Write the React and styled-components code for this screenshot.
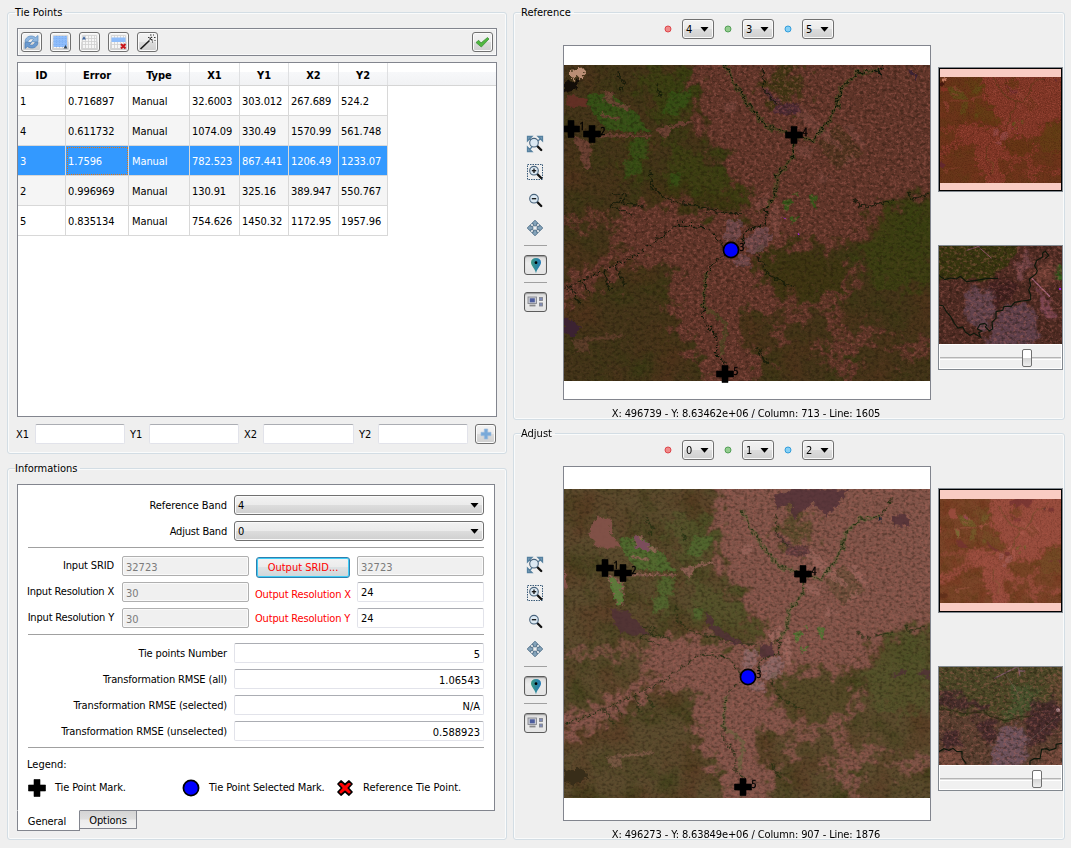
import React, { useId } from 'react';
import styled, { createGlobalStyle, css } from 'styled-components';

const Global = createGlobalStyle`
  * { box-sizing: border-box; }
  body { margin: 0; background: #efefef; color: #000; font: 11px/14px "DejaVu Sans Condensed", "DejaVu Sans", sans-serif; font-stretch: condensed; }
  svg { display: block; }
`;

const Window = styled.div`
  display: grid;
  grid-template-columns: 500px 552px;
  column-gap: 6px;
  width: 1071px;
  height: 848px;
  padding: 5px 0 0 7px;
  overflow: hidden;
  background: #efefef;
`;
const Column = styled.div`
  display: flex;
  flex-direction: column;
  gap: ${(p) => p.$gap}px;
`;
const Group = styled.fieldset`
  margin: 0;
  min-width: 0;
  height: ${(p) => p.$height}px;
  padding: ${(p) => p.$pad};
  border: 1px solid #d3dde4;
  border-radius: 3px;
  box-shadow: inset 0 0 0 1px #fafbfb;
`;
const Title = styled.legend`
  height: 14px;
  padding: 0 3px 0 0;
  margin-left: ${(p) => p.$shift || 0}px;
  line-height: 16px;
  white-space: nowrap;
`;

/* ---- tie point panel ---- */
const Toolbar = styled.div`
  display: flex;
  align-items: center;
  gap: 8px;
  height: 28px;
  padding: 0 3px;
  border: 1px solid #82858e;
  box-shadow: inset 0 0 0 1px #fafafa;
`;
const Spacer = styled.span`flex: 1;`;
const ToolButton = styled.span`
  display: flex;
  align-items: center;
  justify-content: center;
  flex: none;
  width: 21px;
  height: 20px;
  border: 1px solid #707070;
  border-radius: 3px;
  background: linear-gradient(#f3f3f3, #ebebeb 48%, #dcdcdc 52%, #cfcfcf);
  box-shadow: inset 0 0 0 1px #fbfbfb;
`;
const TableFrame = styled.div`
  height: 355px;
  margin-top: 6px;
  border: 1px solid #82858e;
  background: #fff;
`;
const cols = '48px 63px 61px 50px 49px 50px 49px';
const HeadRow = styled.div`
  display: grid;
  grid-template-columns: ${cols} 1fr;
  height: 23px;
  border-bottom: 1px solid #d5d5d5;
  background: linear-gradient(#fff 40%, #f7f8fa 41%, #f1f2f4);
`;
const HeadCell = styled.span`
  padding-top: 6px;
  border-right: 1px solid #dfe0e2;
  text-align: center;
  font-weight: bold;
`;
const Row = styled.div`
  display: grid;
  grid-template-columns: ${cols};
  width: 370px;
  height: 30px;
  background: ${(p) => (p.$selected ? '#3399ff' : p.$alt ? '#f5f5f5' : '#fff')};
  color: ${(p) => (p.$selected ? '#fff' : '#000')};
`;
const Cell = styled.span`
  height: 30px;
  padding: 9px 0 0 ${(p) => p.$left}px;
  border-right: 1px solid #d8d8d8;
  border-bottom: 1px solid #d8d8d8;
  letter-spacing: -0.1px;
  white-space: nowrap;
  ${(p) => p.$focus && css`outline: 1px dotted #d9741b; outline-offset: -2px;`}
`;
const EntryRow = styled.div`
  display: grid;
  grid-template-columns: 18px 90px 24px 90px 24px 91px 24px 90px 28px;
  align-items: center;
  height: 20px;
  margin-top: 7px;
  & > span:nth-child(n + 3):nth-child(odd) { padding-left: 6px; }
  & > span:last-child { margin-left: 7px; padding: 0 !important; }
`;
const Label = styled.span`
  margin: 0 1px 0 -1px;
  letter-spacing: ${(p) => p.$ls ?? -0.14}px;
  text-align: ${(p) => p.$align || 'left'};
  color: ${(p) => p.$color || '#000'};
  padding-top: ${(p) => p.$drop ?? 1}px;
  white-space: nowrap;
`;
const Field = styled.span`
  display: block;
  height: 20px;
  padding: ${(p) => p.$drop || 3}px 3px 0;
  border: 1px solid ${(p) => (p.$off ? '#afafaf' : '#e2e3ea')};
  border-top-color: ${(p) => (p.$off ? '#afafaf' : '#abadb3')};
  border-radius: 2px;
  background: ${(p) => (p.$off ? '#f0f0f0' : '#fff')};
  box-shadow: ${(p) => (p.$off ? 'inset 0 0 0 1px #fafafa' : 'none')};
  color: ${(p) => (p.$off ? '#7b7b7b' : '#000')};
  text-align: ${(p) => p.$align || 'left'};
`;

/* ---- information panel ---- */
const TabPage = styled.div`
  display: flex;
  flex-direction: column;
  width: 478px;
  height: 327px;
  padding: 10px 10px 0;
  border: 1px solid #82858e;
  background: #fff;
`;
const FormRow = styled.div`
  display: grid;
  grid-template-columns: ${(p) => (p.$four ? '88px 127px 94px 127px' : '200px 250px')};
  grid-template-rows: 20px;
  column-gap: ${(p) => (p.$four ? 7 : 6)}px;
  align-items: center;
  height: 20px;
  margin-bottom: 6px;
  ${(p) => p.$four && css`margin-left: -1px;`}
`;
const Divider = styled.div`
  width: 456px;
  height: 1px;
  margin-bottom: 8px;
  background: #a0a0a0;
`;
const Combo = styled.span`
  display: flex;
  align-items: center;
  justify-content: space-between;
  width: ${(p) => p.$width}px;
  height: 20px;
  padding: 2px 4px 0 3px;
  border: 1px solid #707070;
  border-radius: 3px;
  background: linear-gradient(#f2f2f2, #ebebeb 49%, #dddddd 50%, #cfcfcf);
  box-shadow: inset 0 0 0 1px #fafafa;
  & > svg { margin-top: -2px; }
`;
const PushButton = styled.span`
  align-self: start;
  height: 21px;
  padding-top: 3px;
  margin-top: 1px;
  border: 1px solid #2f7fae;
  border-radius: 3px;
  background: linear-gradient(#f2f2f2, #ebebeb 49%, #dde2e4 50%, #cfd6d9);
  box-shadow: inset 0 0 0 1px #3fcdf7;
  color: #f00;
  text-align: center;
`;
const LegendTitle = styled.div`
  margin: 2px 0 0 -1px;
`;
const LegendRow = styled.div`
  display: grid;
  grid-template-columns: 28px 126px 28px 126px 28px 1fr;
  align-items: center;
  height: 20px;
  margin-top: 6px;
`;
const Tabs = styled.div`
  display: flex;
  align-items: flex-start;
  margin-top: -1px;
`;
const Tab = styled.span`
  width: ${(p) => (p.$active ? 63 : 57)}px;
  height: ${(p) => (p.$active ? 21 : 19)}px;
  padding: ${(p) => (p.$active ? '4px 3px 0 0' : '3px 0 0')};
  border: 1px solid #82858e;
  ${(p) => (p.$active ? 'border-top-color: #fff;' : 'border-left-width: 0;')}
  background: ${(p) => (p.$active ? '#fff' : 'linear-gradient(#d4d4d4, #dedede 48%, #ececec 52%, #f2f2f2)')};
  text-align: center;
  letter-spacing: -0.1px;
`;

/* ---- map panels ---- */
const BandRow = styled.div`
  display: flex;
  align-items: flex-start;
  gap: 10px;
  height: 26px;
  padding-left: 150px;
  & > i { margin-top: 6px; }
`;
const Dot = styled.i`
  width: 8px;
  height: 8px;
  border: 1px solid ${(p) => p.$edge};
  border-radius: 50%;
  background: ${(p) => p.$fill};
  transform: scale(0.86);
`;
const ViewRow = styled.div`
  display: grid;
  grid-template-columns: 49px 368px 125px;
  height: 355px;
`;
const ToolColumn = styled.div`
  display: flex;
  flex-direction: column;
  align-items: flex-start;
  padding: 90px 0 0 10px;
  gap: 10px;
  & > svg { margin-left: 2px; }
`;
const ToolLine = styled.i`
  width: 23px;
  height: 1px;
  margin: ${(p) => p.$up}px 0 -1px;
  background: #a0a0a0;
`;
const Toggle = styled.span`
  display: flex;
  align-items: center;
  justify-content: center;
  width: 23px;
  height: 20px;
  border: 1px solid #5c5c5c;
  border-radius: 3px;
  background: linear-gradient(#d9d9d9, #ececec 40%, #e4e4e4);
  box-shadow: inset 0 1px 1px #999;
`;
const Canvas = styled.div`
  border: 1px solid #82858e;
  background: #fff;
  overflow: hidden;
`;
const Side = styled.div`
  display: flex;
  flex-direction: column;
  gap: 53px;
  margin-left: 7px;
  padding-top: 22px;
  width: 125px;
`;
const Overview = styled.div`
  height: 125px;
  border: 1px solid #82888f;
  background: #f9ccc3;
  outline: 1px solid #000;
  outline-offset: -2px;
  padding: ${(p) => p.$top}px 1px 0;
`;
const Lens = styled.div`
  height: 125px;
  border: 1px solid #82888f;
  background: #f0f0f0;
`;
const Slider = styled.div`
  display: flex;
  align-items: center;
  height: 25px;
  border: 1px solid #fff;
  padding-left: ${(p) => p.$at}px;
  background: linear-gradient(#f0f0f0 12px, #b4b4b4 12px, #b4b4b4 13px, #dcdcdc 13px, #dcdcdc 14px, #fff 14px, #fff 15px, #f0f0f0 15px);
  & > i { width: 10px; height: 18px; margin-top: 3px; border: 1px solid #707070; border-radius: 2px; background: linear-gradient(#fff 48%, #d5d5d5 52%, #eee); }
`;
const Status = styled.div`
  width: 366px;
  margin-left: 49px;
  padding-top: 7px;
  text-align: center;
  letter-spacing: -0.12px;
  white-space: nowrap;
`;

/* ---- small drawings ---- */
const Arrow = () => (
  <svg width="9" height="5" viewBox="0 0 9 5"><path d="M.5 0h8L4.5 4.8z" /></svg>
);
const Cross = ({ x = 9, y = 9 }) => (
  <path transform={`translate(${x} ${y})`} d="M-3-8.5h6V-3h5.5v6H3v5.5h-6V3h-5.5v-6H-3z" stroke="#000" strokeWidth=".6" strokeLinejoin="round" />
);
const Disc = ({ x = 9, y = 9 }) => <circle cx={x} cy={y} r="7.6" fill="#00f" stroke="#000" strokeWidth="1.7" />;
const Refresh = () => (
  <svg width="17" height="16" viewBox="0 0 17 16">
    <path d="M2 7.500C2.500 2 9 .5 12.500 3.500L15 1.500V7.500H8.500L10.500 5.500C8.500 4 6 4.800 5.200 7.500z" fill="#8fb6df" stroke="#5a8cc2" strokeWidth=".7" />
    <path d="M15 8.500C14.500 14 8 15.500 4.500 12.500L2 14.500V8.500H8.500L6.500 10.500C8.500 12 11 11.200 11.800 8.500z" fill="#6b9ad0" stroke="#4a7cb3" strokeWidth=".7" />
  </svg>
);
const Grid = ({ kind }) => (
  <svg width="17" height="16" viewBox="0 0 17 16">
    <rect x="1.500" y="1.500" width="14" height="13" fill="#f6f6f6" />
    <path d="M1.500 1.500h14v13h-14zM1.500 4.500h14m-14 3h14m-14 3h14M4.500 1.500v13m3-13v13m3-13v13m3-13v13" fill="none" stroke="#cfcfcf" strokeWidth=".8" />
    {kind === 'all' && <><path d="M1.500 2h13.500v11h-13.500z" fill="#8fbdfb" /><path d="M1.500 4.500h13.500m-13.500 3h13.500m-13.500 3h13.500M4.500 2v11m3-11v11m3-11v11m3-11v11" stroke="#79acf2" strokeWidth=".7" strokeDasharray="1 1" /><path d="M11.500 14.500l2-3.500 2 3.500z" fill="#345" /></>}
    {kind === 'none' && <path d="M1 5.500l2-3.500 2 3.500z" fill="#3f66a0" />}
    {kind === 'remove' && <><path d="M1.500 3.500h14v4.500h-14z" fill="#8fbdfb" /><path d="M11 10l4.500 4.500m0-4.500L11 14.500" stroke="#c9161b" strokeWidth="2" /></>}
  </svg>
);
const Wand = () => (
  <svg width="17" height="16" viewBox="0 0 17 16" fill="none">
    <path d="M1.500 15L10.500 6.500" stroke="#1c1c1c" strokeWidth="1.700" />
    <path d="M9 3.500h1.500m.500-2.500h1.500m1.500 0h1m0 2.500h1.500m-1 3h1m-3.500 1.500h1M10.500 5.500l2.500-2.500M11 4l2.500 2.500" stroke="#333" strokeWidth="1.100" />
    <path d="M11.700 5.300l1.200-1.200" stroke="#fff" />
  </svg>
);
const Check = () => (
  <svg width="17" height="16" viewBox="0 0 17 16"><path d="M2 8.500l2.700-2.200L7 9l6.500-5.500L15 5 7.300 13z" fill="#4fb83e" stroke="#3f8f3a" strokeWidth=".8" /></svg>
);
const Plus = () => (
  <svg width="12" height="12" viewBox="0 0 12 12"><path d="M4.300 1h3.400v3.300H11v3.400H7.700V11H4.300V7.700H1V4.300h3.300z" fill="#79a9d9" stroke="#9dbdde" strokeWidth=".7" /></svg>
);
const Magnifier = ({ kind }) => (
  <svg width="18" height="18" viewBox="0 0 18 18" fill="none">
    {kind === 'extent' && <path d="M1.500 1.500h4.500L1.500 6zM16.500 1.500V6L12 1.500zM1.500 16.500V12L6 16.500zM3 3l3 3m9-3l-3 3M3 15l3-3" fill="#7fa3be" stroke="#55809f" strokeWidth="1.300" />}
    {kind === 'in' && <rect x="1.500" y="1.500" width="15" height="15" stroke="#395a78" strokeDasharray="1.500 1" />}
    <path d="M11.200 11l4 4" stroke="#111" strokeWidth="2.400" strokeLinecap="round" />
    <circle cx="8" cy="7.700" r="4.300" fill="#dbe8f2" stroke="#48637c" strokeWidth="1.100" />
    {kind !== 'extent' && <path d="M5.800 7.700h4.400" stroke="#111" strokeWidth="1.300" />}
    {kind === 'in' && <path d="M8 5.500v4.400" stroke="#111" strokeWidth="1.300" />}
  </svg>
);
const Pan = () => (
  <svg width="18" height="18" viewBox="0 0 18 18" fill="#84a3ba" stroke="#4c6b84" strokeWidth=".9">
    {[0, 90, 180, 270].map((a) => <path key={a} transform={`rotate(${a} 9 9)`} d="M9 1.200l3.400 3.500h-1.800v2.100H7.400V4.700H5.600z" />)}
  </svg>
);
const Pin = () => (
  <svg width="12" height="17" viewBox="0 0 12 17">
    <defs><linearGradient id="pin"><stop stopColor="#3d9b83" /><stop offset="1" stopColor="#2279b8" /></linearGradient></defs>
    <path d="M6 16.500C5.600 12 1 9 1 5.500 1 2.500 3 1 6 1s5 1.500 5 4.500C11 9 6.400 12 6 16.500z" fill="url(#pin)" /><circle cx="6" cy="5.700" r="1.400" />
  </svg>
);
const Screens = () => (
  <svg width="17" height="14" viewBox="0 0 17 14" fill="#7f8bb8" stroke="#85878f" strokeWidth=".9">
    <rect x="1" y="2" width="8.500" height="6.500" fill="#c9cbd2" /><rect x="2.800" y="3.300" width="5" height="4" fill="#4d5d9d" stroke="none" /><path d="M2.500 10.500h6" stroke="#888" strokeWidth="1.800" />
    <rect x="12.500" y="2.500" width="3" height="3" /><rect x="12.500" y="8" width="3" height="3" />
  </svg>
);

/* ---- satellite scenes ---- */
const palettes = {
  reference: { base: '#423418', soil: '#603529', green: '#37430f', leaf: '#2f5c16', field: '#74443a', deep: '#3b3511', city: '#75535f', river: '#0c1606', purple: '#452637' },
  adjust: { base: '#5a4b2d', soil: '#82554a', green: '#53582b', leaf: '#4d7831', field: '#9a685e', deep: '#554a28', city: '#927378', river: '#1b2a0d', purple: '#54333b' },
};

const grains = [
  ['l', '.10 .12', 4, 3, '.72 .41 .37', '4 0 0 0 -1.900'],
  ['d', '.09 .11', 4, 15, '.10 .07 .03', '3.500 0 0 0 -1.650'],
  ['g', '.010', 5, 31, '.19 .23 .06', '3 0 0 0 -1.350'],
  ['o', '.008', 5, 57, '.36 .19 .12', '3 0 0 0 -1.400'],
];
const Filters = ({ id, size = 1 }) => (
  <defs>
    <filter id={`${id}r`} x="-5%" y="-5%" width="110%" height="110%" colorInterpolationFilters="sRGB">
      <feTurbulence type="fractalNoise" baseFrequency=".028" numOctaves="6" seed="4" result="n" />
      <feGaussianBlur in="SourceGraphic" stdDeviation={10 * size} result="b" />
      <feDisplacementMap in="b" in2="n" scale={150 * size} xChannelSelector="R" yChannelSelector="G" />
      <feGaussianBlur stdDeviation="1.500" />
    </filter>
    <filter id={`${id}w`} x="-5%" y="-5%" width="110%" height="110%" colorInterpolationFilters="sRGB">
      <feTurbulence type="fractalNoise" baseFrequency=".06" numOctaves="4" seed="8" result="n" />
      <feDisplacementMap in="SourceGraphic" in2="n" scale={26 * size} xChannelSelector="R" yChannelSelector="G" />
    </filter>
    {grains.map(([k, f, octaves, seed, rgb, gain]) => {
      const [r, g, b] = rgb.split(' ');
      return (
        <filter key={k} id={id + k} x="0" y="0" width="100%" height="100%" colorInterpolationFilters="sRGB">
          <feTurbulence type="fractalNoise" baseFrequency={f} numOctaves={octaves} seed={seed} />
          <feColorMatrix values={`0 0 0 0 ${r} 0 0 0 0 ${g} 0 0 0 0 ${b} ${gain}`} />
        </filter>
      );
    })}
  </defs>
);

const SoilShapes = () => (
  <>
    <path fill="currentColor" d="M400-80 1320-80 1320 440 1110 455 1010 475 940 530 880 600 820 620 700 610 620 630 590 660 600 720 680 770 640 810 540 820 550 900 620 970 560 1080 440 1080 420 960 335 860 330 720 350 660 220 680 100 750-130 860-130 780 60 700 180 620 180 510 260 490 350 500 470 525 570 530 590 500 500 370 420 260z" />
    <path d="M580 740C680 830 740 820 800 790S860 760 872 670M800 790C860 860 820 900 880 1060M950 860L830 960 760 920M680 860L620 870M1000 920L1070 930 1160 900" fill="none" stroke="currentColor" strokeWidth="38" strokeLinejoin="round" />
    <path d="M-130 560C20 530 150 540 200 580" fill="none" stroke="currentColor" strokeWidth="24" />
  </>
);

function Ground({ id, c }) {
  const box = { x: -150, y: -60, width: 1320, height: 1150 };
  return (
    <>
      <rect {...box} fill={c.base} />
      <rect {...box} filter={`url(#${id}g)`} opacity=".5" />
      <rect {...box} filter={`url(#${id}o)`} opacity=".4" />
      <g filter={`url(#${id}r)`} fill={c.green} opacity=".65">
        <path d="M240 90L400 90 400 240 280 230zM330 290L480 380 570 480 540 510 320 450zM190 290L260 300 250 410 190 420z" />
        <path d="M990 500L1130 480 1130 740 960 760 900 640z" />
      </g>
      <g filter={`url(#${id}w)`}>
        <path d="M75 165L150 160 230 215 270 280 140 270 100 220z" fill={c.leaf} opacity=".7" />
        <path d="M330 160L395 150 385 190 345 225 310 215zM190 370L240 340 245 400 195 415zM330 400L365 400 360 440 330 435zM225 290L270 295 260 360 200 345z" fill={c.leaf} opacity=".5" />
        <path d="M135 150L155 155 165 185 212 200 205 212 135 185zM125 218L185 235 180 244 120 230zM40 285L95 310 95 388 72 390zM285 265L400 240 400 252 330 265 315 300zM95 282L275 284 275 290 100 293z" fill={c.field} opacity=".8" />
        <path d="M30 900L190 880 195 890 85 905 90 935 55 940z" fill={c.field} opacity=".5" />
        <path d="M110 310L210 300 190 360 110 350zM280 330L330 340 320 400 280 390z" fill={c.base} opacity=".7" />
      </g>
      <g filter={`url(#${id}r)`} color={c.soil}><SoilShapes /></g>
      <g filter={`url(#${id}r)`} fill={c.deep} opacity=".85">
        <path d="M620 80L700 75 730 150 700 190 640 180 610 150z" />
        <path d="M590 640L700 620 800 640 850 700 830 760 740 790 660 740 620 710z" />
        <path d="M270 450C340 470 400 500 540 510L550 490 330 430z" />
      </g>
      <g filter={`url(#${id}w)`}>
        <path d="M770 310L835 250 910 340 830 390z" fill={c.base} opacity=".5" />
        <path d="M705 225L730 200 850 320 840 330 770 285zM850 250L870 250 920 320 920 335 870 290zM705 320L760 320 755 355 715 350zM780 395L820 410 800 430 770 420zM490 190L530 180 520 215 495 220zM865 350L885 340 880 365 850 380z" fill={c.field} opacity=".7" />
        <path d="M585 490L630 450 620 500 595 520zM625 520L650 490 662 530 655 590 640 585z" fill={c.field} opacity=".9" />
        <path d="M500 540L550 545 540 590 495 610zM550 600L590 565 620 560 640 600 600 640 565 640zM515 660L560 640 575 680 530 680z" fill={c.city} opacity=".6" />
        <path d="M640 195L720 190 715 222 645 225zM600 140L620 150 670 190 640 190z" fill={c.purple} opacity=".7" />
        <path d="M665 490L690 470 700 485 680 515zM745 465L765 460 770 505 755 500zM690 540L715 520 720 530 700 550zM700 460L715 455 715 475z" fill={c.leaf} opacity=".85" />
      </g>
      <mask id={`${id}m`} maskUnits="userSpaceOnUse" {...box}>
        <rect {...box} fill="#3a3a3a" />
        <g filter={`url(#${id}r)`} color="#fff"><SoilShapes /></g>
      </mask>
      <g mask={`url(#${id}m)`}><rect {...box} filter={`url(#${id}l)`} opacity=".34" /></g>
      <rect {...box} filter={`url(#${id}d)`} opacity=".36" />
      <g stroke={c.river} strokeWidth="4" opacity=".75" fill="none" filter={`url(#${id}w)`}>
        <path d="M150 460L200 465 190 490 250 500M180 480L150 500 210 520M270 390L275 440 320 480 400 495 480 520 550 520M590 640L620 700 700 745M30 740L60 790M70 725L85 760M130 690L150 750M165 680L200 740M880 480L900 500 960 490 1000 480M1040 460L1060 480 1110 460M610 85L610 150 650 190M170 100L195 130 180 150M290 130L300 170M590 920L620 970" />
      </g>
      <g fill="none" filter={`url(#${id}w)`}>
        <path d="M490 70L530 140 570 200 620 260 700 285 760 300 800 250 830 200 840 150 890 100 960 90M700 290L700 350 650 410 650 460 620 500M440 690L430 800 500 850 480 950" stroke={c.leaf} strokeWidth="12" opacity=".3" />
        <g stroke={c.river} strokeWidth="5" strokeDasharray="8 3 4 4">
          <path d="M490 70L530 140 570 200 620 260 700 285 760 300 800 250 830 200 840 150 890 100 960 90 1000 30M700 290L700 350 650 410 650 460 620 500 615 555 560 570 545 620" />
          <path d="M-100 790L15 745 110 700 230 645 320 580 360 550 450 570 480 610 512 630 440 690 430 800 430 840 470 890 470 950 500 970" strokeWidth="4" />
        </g>
      </g>
    </>
  );
}

function Scene({ kind, width, height }) {
  const id = useId().replace(/[^a-z0-9]/gi, '') + 't';
  const c = palettes[kind];
  const adjust = kind === 'adjust';
  return (
    <svg width={width} height={height} viewBox={adjust ? '12 87 1098 927' : '12 75 1098 948'} preserveAspectRatio="none">
      <Filters id={id} />
      <g transform={adjust ? 'translate(107 89) scale(.89)' : undefined}><Ground id={id} c={c} /></g>
      {adjust ? (
        <g filter={`url(#${id}w)`}>
          <path d="M110 170L155 180 150 215 180 265 105 260 85 210zM12 330L20 345 20 390 12 385z" fill="#85524a" opacity=".9" />
          <path d="M150 445L205 455 270 525 180 520zM435 445L470 500 560 560 510 550 450 510zM640 110L700 85 860 90 840 130 800 170 760 130 700 175 690 130 650 150zM995 170L1040 160 1050 195 1000 200zM985 650L1040 628 1030 645zM1070 640L1110 625 1110 655zM600 560L640 545 640 590 600 590z" fill="#502f37" opacity=".8" />
          <path d="M12 930L70 925 85 955 40 975 12 965z" fill="#382d19" />
          <path d="M225 225L270 250 265 275 230 265z" fill="#7b4d5c" /><path d="M145 350L185 370 190 430 170 435z" fill="#548036" opacity=".8" />
          <ellipse cx="960" cy="178" rx="5" ry="10" fill="#142035" />
        </g>
      ) : (
        <g filter={`url(#${id}w)`}>
          <path d="M30 90L75 85 65 120 50 105 30 115z" fill="#b98d74" /><path d="M12 125L55 115 50 150 12 160z" fill="#130d08" />
          <path d="M22 165L80 175 80 200 22 200z" fill="#6a3028" opacity=".8" />
          <path d="M1040 85L1070 105 1070 125zM12 830L65 860 35 895 12 870z" fill="#3b2232" />
          <ellipse cx="957" cy="103" rx="6" ry="10" fill="#0c130b" /><circle cx="670" cy="535" r="3" fill="#9b28d8" /><circle cx="716" cy="583" r="3" fill="#9b28d8" />
        </g>
      )}
    </svg>
  );
}

function LensView({ kind }) {
  const id = useId().replace(/[^a-z0-9]/gi, '') + 'z';
  const adjust = kind === 'adjust';
  const y = adjust ? 561 : 573;
  const box = { x: 27, y, width: 369, height: 294 };
  return (
    <svg width="123" height="98" viewBox={`27 ${y} 369 294`}>
      <Filters id={id} size={0.4} />
      <rect {...box} fill={adjust ? '#593f30' : '#4d2a22'} />
      {adjust ? (
        <>
          <g filter={`url(#${id}r)`}>
            <path d="M0 530H410V640L330 700 220 720 160 695 100 710 0 680z" fill="#4a4726" />
            <path d="M250 610L330 630 320 700 220 720z" fill="#455a30" opacity=".6" />
            <path d="M20 635L90 640 130 665 185 670 180 690 120 690 60 690 20 665zM320 660L380 655 396 740 300 800 290 720zM40 745L80 760 100 800 60 815 35 780zM140 710L205 730 180 800 145 760z" fill="#43282c" opacity=".85" />
            <path d="M200 750L270 735 300 790 270 865 180 865z" fill="#6d525c" /><path d="M15 815L80 810 100 865H15zM330 835L406 795V870H310z" fill="#744a3c" />
            <path d="M350 600L400 580 400 670 370 650z" fill="#684a35" opacity=".7" />
          </g>
          <path d="M192 596L262 560M265 563l5 25m-5-15h20" fill="none" stroke="#896077" strokeWidth="4" opacity=".8" />
          <path d="M225 580L270 650M396 700L300 780" stroke="#776661" strokeWidth="2" opacity=".7" />
          <circle cx="384" cy="691" r="6" fill="#c69aa0" />
        </>
      ) : (
        <>
          <g filter={`url(#${id}r)`}>
            <path d="M0 550H260L250 610 200 660 120 680 80 665 0 670z" fill="#37360f" />
            <path d="M105 710L190 700 200 750 170 830 110 800z" fill="#62434d" /><path d="M200 770L290 735 325 790 310 880H170z" fill="#5f404b" />
            <path d="M325 620L370 610 380 690 340 700 305 660z" fill="#6a3b31" /><path d="M250 650L290 590 305 600 280 670z" fill="#7a4a50" opacity=".8" /><path d="M320 690L350 720 375 800 350 795z" fill="#7d4653" />
            <path d="M180 680L270 680 250 730 200 750z" fill="#40201f" /><path d="M380 640H405V670H385z" fill="#35641f" />
          </g>
          <path d="M305 670L360 725" stroke="#a96982" strokeWidth="4" /><path d="M110 586L150 573M145 575L185 610" stroke="#854e66" strokeWidth="3" />
          <rect x="387" y="699" width="6" height="6" fill="#a322ee" />
        </>
      )}
      <rect {...box} filter={`url(#${id}l)`} opacity=".35" />
      <rect {...box} filter={`url(#${id}d)`} opacity=".4" />
      <g fill="none" stroke="#0d170b" strokeWidth="3.500">
        {adjust ? <><path d="M27 815l14-9 16 5 12-6 12 10 15 0 0 18 12 18M300 855v-12l12-7h18l5-28 15-2 8 5 20-6 0-12 18-3" /><path d="M27 685l45 8 25 8 40-3 25-3 22 15 40 12 50-10 35-5" stroke="#24280f" opacity=".7" filter={`url(#${id}w)`} /></>
          : <path d="M27 750l12 2 10 18 13 15 11 20 11 14 14-3 8 15 14 10 12-6 20 12-6-14 10-5-14-6 8-14 14-3 6 5-4 6 12 12 10-6-2-20 12-12 0-20 20-4 4-12 22 0 10-12 22-4 16-2 10-2 0-14-6-16 6-12-4-20 20-15 4-10-8-15 6-16 18-10 0-12 8-5 10 12-10 10M27 662l18 12 16-5 18 3 12-8 18 16 25-3 40-7 30 0" />}
      </g>
    </svg>
  );
}

const MarkName = ({ x, y, children }) => (
  <text x={x} y={y} fontFamily="'Open Sans', sans-serif" fontSize="11.500" stroke="#000" strokeWidth=".3">{children}</text>
);

function MapPanel({ kind, title, bands, marks, status, top, imageHeight, overviewTop, slider }) {
  const dots = [['#d8353b', '#f08a8a'], ['#459549', '#93cc8e'], ['#1f93d6', '#86d0f5']];
  const overviewHeight = kind === 'adjust' ? 104 : 106;
  return (
    <Group $height={kind === 'adjust' ? 414 : 415} $pad="0">
      <Title $shift={7}>{title}</Title>
      <BandRow>
        {bands.map((b, i) => (
          <React.Fragment key={b}><Dot $edge={dots[i][0]} $fill={dots[i][1]} /><Combo $width={32}>{b}<Arrow /></Combo></React.Fragment>
        ))}
      </BandRow>
      <ViewRow>
        <ToolColumn>
          <Magnifier kind="extent" /><Magnifier kind="in" /><Magnifier kind="out" /><Pan />
          <ToolLine $up={-2} /><Toggle><Pin /></Toggle><ToolLine $up={-3} /><Toggle><Screens /></Toggle>
        </ToolColumn>
        <Canvas>
          <svg width="366" height="353">
            <svg y={top} width="366" height={imageHeight}><Scene kind={kind} width={366} height={imageHeight} /></svg>
            {marks.map(([n, x, y]) => (
              <g key={n}>{n === '3' ? <Disc x={x} y={y} /> : <Cross x={x} y={y} />}<MarkName x={x + 8.5} y={y + 1}>{n}</MarkName></g>
            ))}
          </svg>
        </Canvas>
        <Side>
          <Overview $top={overviewTop}>
            <svg width="121" height={overviewHeight}>
              <Scene kind={kind} width={121} height={overviewHeight} />
              <rect width="121" height="106" fill="#d83a20" opacity=".26" />
            </svg>
          </Overview>
          <Lens><LensView kind={kind} /><Slider $at={slider}><i /></Slider></Lens>
        </Side>
      </ViewRow>
      <Status>{status}</Status>
    </Group>
  );
}

const rows = [
  ['1', '0.716897', 'Manual', '32.6003', '303.012', '267.689', '524.2'],
  ['4', '0.611732', 'Manual', '1074.09', '330.49', '1570.99', '561.748'],
  ['3', '1.7596', 'Manual', '782.523', '867.441', '1206.49', '1233.07'],
  ['2', '0.996969', 'Manual', '130.91', '325.16', '389.947', '550.767'],
  ['5', '0.835134', 'Manual', '754.626', '1450.32', '1172.95', '1957.96'],
];
const results = [['Tie points Number', '5'], ['Transformation RMSE (all)', '1.06543'], ['Transformation RMSE (selected)', 'N/A'], ['Transformation RMSE (unselected)', '0.588923']];

export default function App() {
  return (
    <>
      <Global />
      <Window>
        <Column $gap={7}>
          <Group $height={449} $pad="9px 9px 0">
            <Title $shift={-2}>Tie Points</Title>
            <Toolbar>
              <ToolButton><Refresh /></ToolButton><ToolButton><Grid kind="all" /></ToolButton><ToolButton><Grid kind="none" /></ToolButton>
              <ToolButton><Grid kind="remove" /></ToolButton><ToolButton><Wand /></ToolButton><Spacer /><ToolButton><Check /></ToolButton>
            </Toolbar>
            <TableFrame>
              <HeadRow>{['ID', 'Error', 'Type', 'X1', 'Y1', 'X2', 'Y2'].map((h) => <HeadCell key={h}>{h}</HeadCell>)}</HeadRow>
              {rows.map((r, i) => (
                <Row key={r[0]} $alt={i % 2 === 1} $selected={i === 2}>
                  {r.map((v, j) => <Cell key={j} $left={j === 2 ? 3 : 2} $focus={i === 2 && j === 1}>{v}</Cell>)}
                </Row>
              ))}
            </TableFrame>
            <EntryRow>
              {['X1', 'Y1', 'X2', 'Y2'].map((l) => <React.Fragment key={l}><Label $ls={0}>{l}</Label><Field /></React.Fragment>)}
              <ToolButton><Plus /></ToolButton>
            </EntryRow>
          </Group>
          <Group $height={379} $pad="9px 9px 0">
            <Title $shift={-2}>Informations</Title>
            <TabPage>
              <FormRow><Label $align="right" $ls={-0.05}>Reference Band</Label><Combo $width={250}>4<Arrow /></Combo></FormRow>
              <FormRow><Label $align="right" $ls={-0.2}>Adjust Band</Label><Combo $width={250}>0<Arrow /></Combo></FormRow>
              <Divider />
              <FormRow $four><Label $align="right" $drop={0}>Input SRID</Label><Field $off $drop={4}>32723</Field><PushButton>Output SRID...</PushButton><Field $off $drop={4}>32723</Field></FormRow>
              <FormRow $four><Label $align="right" $drop={0} $ls={-0.18}>Input Resolution X</Label><Field $off $drop={4}>30</Field><Label $align="right" $color="#f00" $drop={6} $ls={-0.17}>Output Resolution X</Label><Field>24</Field></FormRow>
              <FormRow $four><Label $align="right" $drop={0} $ls={-0.18}>Input Resolution Y</Label><Field $off $drop={4}>30</Field><Label $align="right" $color="#f00" $drop={2} $ls={-0.17}>Output Resolution Y</Label><Field>24</Field></FormRow>
              <Divider />
              {results.map(([l, v]) => <FormRow key={l}><Label $align="right">{l}</Label><Field $align="right" $drop={4}>{v}</Field></FormRow>)}
              <Divider />
              <LegendTitle>Legend:</LegendTitle>
              <LegendRow>
                <svg width="18" height="18"><Cross /></svg><Label $drop={0}>Tie Point Mark.</Label>
                <svg width="18" height="18"><Disc /></svg><Label $drop={0}>Tie Point Selected Mark.</Label>
                <svg width="18" height="18" viewBox="0 0 18 18"><path d="M5 2l4 3.500L13 2l3 3-3.700 4L16 13l-3 3-4-3.500L5 16l-3-3 3.700-4L2 5z" fill="#f00" stroke="#000" strokeWidth="1.700" strokeLinejoin="round" /></svg><Label $drop={0} $ls={0}>Reference Tie Point.</Label>
              </LegendRow>
            </TabPage>
            <Tabs><Tab $active>General</Tab><Tab>Options</Tab></Tabs>
          </Group>
        </Column>
        <Column $gap={6}>
          <MapPanel kind="reference" title="Reference" bands={['4', '3', '5']} top={19} imageHeight={316} overviewTop={9} slider={82}
            marks={[['1', 7, 83], ['2', 28, 88], ['4', 230, 89], ['3', 167, 204], ['5', 161, 328]]}
            status="X: 496739 - Y: 8.63462e+06 / Column: 713 - Line: 1605" />
          <MapPanel kind="adjust" title="Adjust" bands={['0', '1', '2']} top={22} imageHeight={309} overviewTop={10} slider={92}
            marks={[['1', 41, 101], ['2', 59, 106], ['4', 239, 107], ['3', 184, 210], ['5', 179, 320]]}
            status="X: 496273 - Y: 8.63849e+06 / Column: 907 - Line: 1876" />
        </Column>
      </Window>
    </>
  );
}
